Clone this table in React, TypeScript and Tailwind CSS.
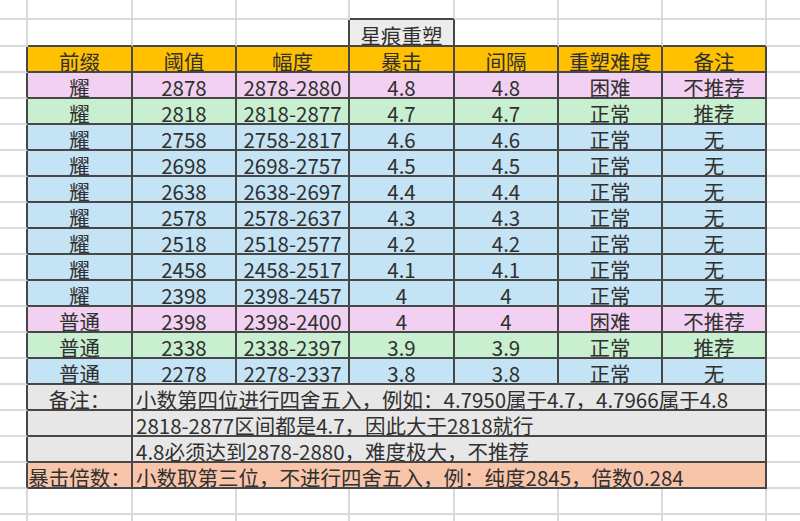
import type { ReactNode } from 'react'

const bgs: { [key: string]: string } = {
  pink: 'bg-[#f1d0f1]',
  green: 'bg-[#c8efd0]',
  blue: 'bg-[#c4e3f4]',
  head: 'bg-[#ffc000]',
  note: 'bg-[#e7e7e7]',
  peach: 'bg-[#f8c5aa]',
  title: 'bg-[#ececec]',
  none: 'bg-white',
}

const rows = [
  ['耀', '2878', '2878-2880', '4.8', '4.8', '困难', '不推荐', 'pink'],
  ['耀', '2818', '2818-2877', '4.7', '4.7', '正常', '推荐', 'green'],
  ['耀', '2758', '2758-2817', '4.6', '4.6', '正常', '无', 'blue'],
  ['耀', '2698', '2698-2757', '4.5', '4.5', '正常', '无', 'blue'],
  ['耀', '2638', '2638-2697', '4.4', '4.4', '正常', '无', 'blue'],
  ['耀', '2578', '2578-2637', '4.3', '4.3', '正常', '无', 'blue'],
  ['耀', '2518', '2518-2577', '4.2', '4.2', '正常', '无', 'blue'],
  ['耀', '2458', '2458-2517', '4.1', '4.1', '正常', '无', 'blue'],
  ['耀', '2398', '2398-2457', '4', '4', '正常', '无', 'blue'],
  ['普通', '2398', '2398-2400', '4', '4', '困难', '不推荐', 'pink'],
  ['普通', '2338', '2338-2397', '3.9', '3.9', '正常', '推荐', 'green'],
  ['普通', '2278', '2278-2337', '3.8', '3.8', '正常', '无', 'blue'],
]

const notes = [
  ['备注：', '小数第四位进行四舍五入，例如：4.7950属于4.7，4.7966属于4.8', 'note'],
  ['', '2818-2877区间都是4.7，因此大于2818就行', 'note'],
  ['', '4.8必须达到2878-2880，难度极大，不推荐', 'note'],
  ['暴击倍数：', '小数取第三位，不进行四舍五入，例：纯度2845，倍数0.284', 'peach'],
]

function Cell({
  right = 'light',
  bottom = 'light',
  bg = 'none',
  left = false,
  span = false,
  children,
}: {
  right?: 'light' | 'dark' | 'none'
  bottom?: 'light' | 'dark'
  bg?: string
  left?: boolean
  span?: boolean
  children?: ReactNode
}) {
  return (
    <div
      className={[
        'flex items-end overflow-visible whitespace-nowrap leading-[20px]',
        left ? 'justify-start pl-[3px]' : 'justify-center',
        span ? 'col-span-6' : '',
        right === 'none' ? '' : 'border-r-2',
        right === 'dark' ? 'border-r-[#474747]' : 'border-r-[#dadada]',
        'border-b-2',
        bottom === 'dark' ? 'border-b-[#474747]' : 'border-b-[#dadada]',
        bgs[bg],
      ].join(' ')}
    >
      {children}
    </div>
  )
}

function MarginRow() {
  return (
    <>
      <Cell />
      <Cell />
      <Cell />
      <Cell />
      <Cell />
      <Cell />
      <Cell />
      <Cell />
      <Cell right="none" />
    </>
  )
}

function TableRow({ cells, bg }: { cells: string[]; bg: string }) {
  return (
    <>
      <Cell right="dark" />
      {cells.map((c, i) => (
        <Cell key={i} right="dark" bottom="dark" bg={bg}>
          {c}
        </Cell>
      ))}
      <Cell right="none" />
    </>
  )
}

export default function App() {
  return (
    <div
      className="grid h-[521px] w-[800px] grid-cols-[28px_105px_104px_113px_105px_104px_104px_104px_33px] grid-rows-[20px_27px] auto-rows-[26px] overflow-hidden bg-white text-[20.5px] text-[#303030]"
      style={{ fontFamily: '"Noto Sans CJK SC", "Noto Sans", sans-serif' }}
    >
      {/* top blank row, title cell sits under column 4 */}
      <Cell />
      <Cell />
      <Cell />
      <Cell />
      <Cell bottom="dark" />
      <Cell />
      <Cell />
      <Cell />
      <Cell right="none" />

      <Cell />
      <Cell bottom="dark" />
      <Cell bottom="dark" />
      <Cell right="dark" bottom="dark" />
      <Cell right="dark" bottom="dark" bg="title">
        星痕重塑
      </Cell>
      <Cell bottom="dark" />
      <Cell bottom="dark" />
      <Cell bottom="dark" />
      <Cell right="none" />

      <TableRow
        cells={['前缀', '阈值', '幅度', '暴击', '间隔', '重塑难度', '备注']}
        bg="head"
      />
      {rows.map((r, i) => (
        <TableRow key={i} cells={r.slice(0, 7)} bg={r[7]} />
      ))}

      {notes.map((n, i) => (
        <div key={i} className="contents">
          <Cell right="dark" />
          <Cell right="dark" bottom="dark" bg={n[2]}>
            {n[0]}
          </Cell>
          <Cell right="dark" bottom="dark" bg={n[2]} left span>
            {n[1]}
          </Cell>
          <Cell right="none" />
        </div>
      ))}

      <MarginRow />
      <MarginRow />
    </div>
  )
}
